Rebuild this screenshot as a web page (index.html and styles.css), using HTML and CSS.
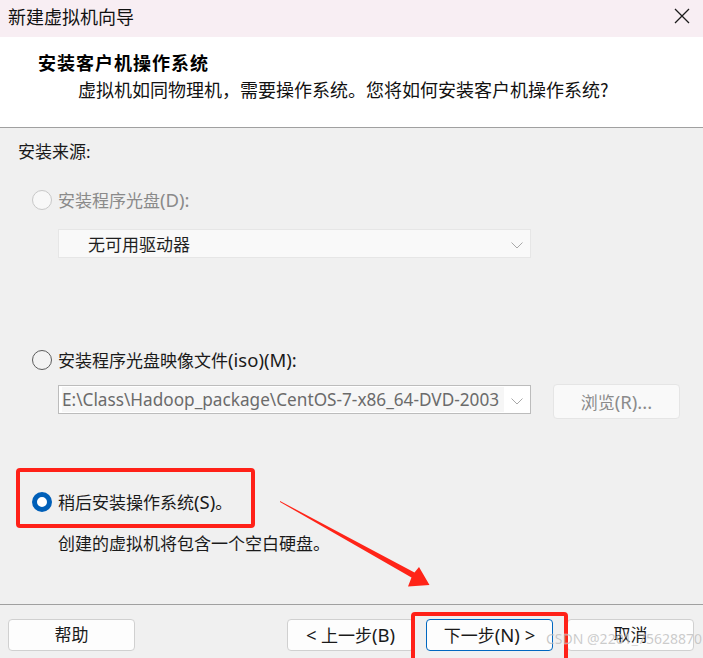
FILE: index.html
```html
<!DOCTYPE html>
<html lang="zh-CN">
<head>
<meta charset="utf-8">
<title>新建虚拟机向导</title>
<link rel="stylesheet" href="styles.css">
</head>
<body>
<div class="window">
  <div class="titlebar">
    <span class="title">新建虚拟机向导</span>
    <svg class="close" width="16" height="16" viewBox="0 0 16 16"><path d="M1 1 L15 15 M15 1 L1 15" stroke="#1b1b1b" stroke-width="1.3" fill="none"/></svg>
  </div>
  <div class="header">
    <div class="heading">安装客户机操作系统</div>
    <div class="subtitle">虚拟机如同物理机，需要操作系统。您将如何安装客户机操作系统?</div>
  </div>
  <div class="content">
    <div class="source-label">安装来源:</div>

    <div class="option option-1">
      <span class="radio radio-disabled"></span>
      <span class="label label-disabled">安装程序光盘<span class="lat">(D):</span></span>
    </div>
    <div class="combo combo-disabled">
      <span class="combo-text">无可用驱动器</span>
      <svg class="chev" width="12" height="7" viewBox="0 0 12 7"><path d="M0.5 0.5 L6 6 L11.5 0.5" stroke="#a8a8a8" stroke-width="1" fill="none"/></svg>
    </div>

    <div class="option option-2">
      <span class="radio"></span>
      <span class="label">安装程序光盘映像文件<span class="lat">(iso)(M):</span></span>
    </div>
    <div class="iso-row">
      <div class="combo combo-iso">
        <span class="iso-text">E:\Class\Hadoop_package\CentOS-7-x86_64-DVD-2003</span>
        <svg class="chev" width="12" height="7" viewBox="0 0 12 7"><path d="M0.5 0.5 L6 6 L11.5 0.5" stroke="#a8a8a8" stroke-width="1" fill="none"/></svg>
      </div>
      <div class="browse">浏览<span class="lat">(R)...</span></div>
    </div>

    <div class="option option-3">
      <span class="radio radio-checked"></span>
      <span class="label">稍后安装操作系统<span class="lat">(S)</span>。</span>
    </div>
    <div class="desc">创建的虚拟机将包含一个空白硬盘。</div>
  </div>
  <div class="footer">
    <div class="btn btn-help">帮助</div>
    <div class="spacer"></div>
    <div class="btn btn-prev"><span class="lat">&lt;</span> 上一步<span class="lat">(B)</span></div>
    <div class="btn btn-next">下一步<span class="lat">(N) &gt;</span></div>
    <div class="btn btn-cancel">取消</div>
  </div>

  <div class="mark mark-option"></div>
  <div class="mark mark-next"></div>
  <svg class="arrow" width="703" height="658" viewBox="0 0 703 658">
    <polygon points="280,501 414.5,572.5 419,567 429.5,585 408,586.5 411.5,577.5 280,502" fill="#ff2418"/>
  </svg>
  <div class="watermark">CSDN @2201_75628870</div>
</div>
</body>
</html>
```

FILE: styles.css
```css
* { box-sizing: border-box; }
html, body {
  margin: 0;
  padding: 0;
}
body {
  width: 703px;
  height: 658px;
  overflow: hidden;
  background: #f0f0f0;
  font-family: "Noto Sans", "Noto Sans CJK SC", sans-serif;
  color: #1a1a1a;
}
.window {
  position: relative;
  width: 703px;
  height: 658px;
  display: flex;
  flex-direction: column;
}
.titlebar {
  height: 37px;
  background: #f8eef3;
  display: flex;
  align-items: flex-start;
  justify-content: space-between;
  padding: 4px 13px 0 8px;
}
.title {
  font-family: "Noto Sans CJK SC", sans-serif;
  font-size: 18px;
  line-height: 24px;
  color: #111;
}
.close {
  margin-top: 4px;
}
.header {
  height: 91px;
  background: #ffffff;
  border-bottom: 1px solid #a0a0a0;
  padding: 13px 0 0 38px;
}
.heading {
  font-family: "Noto Sans CJK SC", sans-serif;
  font-weight: bold;
  font-size: 18px;
  letter-spacing: 1px;
  line-height: 24px;
  color: #000;
}
.subtitle {
  font-family: "Noto Sans CJK SC", sans-serif;
  font-size: 18px;
  line-height: 24px;
  margin: 3px 0 0 40px;
  color: #111;
}
.content {
  height: 477px;
  padding: 12px 0 0 0;
  display: flex;
  flex-direction: column;
  align-items: flex-start;
  border-bottom: 1px solid #a0a0a0;
}
.source-label {
  font-size: 17px;
  line-height: 24px;
  margin-left: 18px;
  color: #1a1a1a;
}
.lat {
  font-size: 18.5px;
}
.option {
  display: flex;
  align-items: center;
  height: 20px;
  margin-left: 32px;
  gap: 6px;
}
.option-1 { margin-top: 26px; }
.option-2 { margin-top: 92px; }
.option-3 { margin-top: 73px; }
.label {
  font-size: 17px;
  line-height: 20px;
  color: #1a1a1a;
  white-space: nowrap;
}
.label-disabled { color: #8a8a8a; }
.radio {
  width: 20px;
  height: 20px;
  border-radius: 50%;
  border: 1px solid #5c5c5c;
  background: #f3f3f3;
  flex: none;
}
.radio-disabled {
  border-color: #c8c8c8;
  background: #f8f8f8;
}
.radio-checked {
  border: 5.5px solid #005fb8;
  background: #ffffff;
}
.combo {
  position: relative;
  width: 473px;
  height: 29px;
  margin-left: 58px;
  display: flex;
  align-items: center;
}
.combo-disabled {
  margin-top: 19px;
  background: #f9f9f9;
  border: 1px solid #e6e6e6;
  padding-left: 29px;
}
.combo-text {
  font-family: "Noto Sans CJK SC", sans-serif;
  font-size: 17px;
  line-height: 20px;
  color: #1f1f1f;
}
.chev {
  position: absolute;
  right: 7px;
  top: 12px;
}
.iso-row {
  display: flex;
  align-items: flex-start;
  margin-top: 14px;
  margin-left: 58px;
  gap: 22px;
}
.combo-iso {
  margin-left: 0;
  margin-top: 1px;
  background: #ffffff;
  border: 1px solid #bcbcbc;
  padding-left: 3px;
}
.iso-text {
  display: block;
  width: 442px;
  overflow: hidden;
  white-space: nowrap;
  font-size: 17.2px;
  line-height: 25px;
  color: #6b6b6b;
  background: #f6f6f6;
}
.browse {
  width: 127px;
  height: 35px;
  border: 1px solid #e5e5e5;
  border-radius: 4px;
  background: #f9f9f9;
  font-size: 17px;
  line-height: 33px;
  text-align: center;
  color: #8b8b8b;
}
.desc {
  font-family: "Noto Sans CJK SC", sans-serif;
  font-size: 17px;
  line-height: 24px;
  margin: 19px 0 0 58px;
  color: #1a1a1a;
}
.footer {
  flex: 1;
  display: flex;
  align-items: flex-start;
  padding: 14px 9px 0 8px;
}
.spacer { flex: 1; }
.btn {
  width: 127px;
  height: 32px;
  border: 1px solid #d0d0d0;
  border-radius: 4px;
  background: #fdfdfd;
  font-size: 17px;
  line-height: 30px;
  text-align: center;
  color: #1a1a1a;
  white-space: nowrap;
}
.btn-next {
  margin-left: 12px;
  border-color: #0067c0;
}
.btn-cancel { margin-left: 14px; }
.mark {
  position: absolute;
  border: 4px solid #ff2118;
  border-radius: 4px;
  pointer-events: none;
}
.mark-option {
  left: 16px;
  top: 468px;
  width: 239px;
  height: 60px;
}
.mark-next {
  left: 411px;
  top: 612px;
  width: 157px;
  height: 50px;
}
.arrow {
  position: absolute;
  left: 0;
  top: 0;
  pointer-events: none;
}
.watermark {
  position: absolute;
  left: 546px;
  top: 628px;
  font-size: 14px;
  line-height: 22px;
  color: rgba(165, 165, 165, 0.7);
  -webkit-text-stroke: 0.3px rgba(255,255,255,0.6);
  pointer-events: none;
}
```
